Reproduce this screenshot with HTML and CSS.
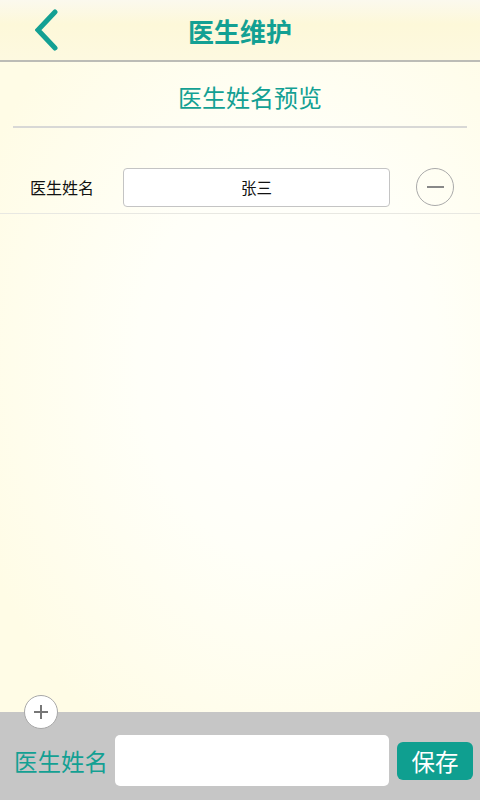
FILE: index.html
```html
<!DOCTYPE html>
<html lang="zh">
<head>
<meta charset="utf-8">
<link rel="stylesheet" href="styles.css">
</head>
<body>
<div class="page">
  <header class="topbar">
    <span class="back">
      <svg width="30" height="44" viewBox="0 0 30 44"><path d="M20 4 L3 22 L20 40" fill="none" stroke="#13a093" stroke-width="5" stroke-linecap="round" stroke-linejoin="miter"/></svg>
    </span>
    <h1 class="title">医生维护</h1>
  </header>
  <section class="preview">
    <h2 class="preview-title">医生姓名预览</h2>
    <div class="divider"></div>
  </section>
  <div class="row">
    <span class="row-label">医生姓名</span>
    <div class="row-input">张三</div>
    <span class="minus"><span class="minus-bar"></span></span>
  </div>
  <div class="spacer"></div>
  <footer class="bottombar">
    <span class="plus">
      <svg width="16" height="16" viewBox="0 0 16 16"><path d="M8 1 V15 M1 8 H15" stroke="#777" stroke-width="2"/></svg>
    </span>
    <span class="bottom-label">医生姓名</span>
    <div class="bottom-input"></div>
    <button class="save">保存</button>
  </footer>
</div>
</body>
</html>
```
FILE: styles.css
```css
html, body {
  margin: 0;
  padding: 0;
}
body {
  font-family: "Noto Sans CJK SC", "Noto Sans", sans-serif;
  width: 480px;
  height: 800px;
  overflow: hidden;
}
.page {
  width: 480px;
  height: 800px;
  display: flex;
  flex-direction: column;
  background: radial-gradient(ellipse 70% 55% at 60% 45%, #ffffff 0%, #fffff8 45%, #fffce6 100%);
}
.topbar {
  height: 60px;
  flex: none;
  display: flex;
  align-items: center;
  justify-content: center;
  position: relative;
  border-bottom: 2px solid #bcbcb6;
  background: linear-gradient(180deg, #fbf9ee 0%, #fdf8d9 40%, #fdf9e0 100%);
}
.back {
  position: absolute;
  left: 35px;
  top: 8px;
  display: flex;
}
.title {
  margin: 0;
  font-size: 26px;
  font-weight: bold;
  color: #13a093;
  letter-spacing: 0;
}
.preview {
  padding: 0 13px;
  flex: none;
}
.preview-title {
  margin: 0;
  height: 64px;
  line-height: 70px;
  padding-left: 20px;
  text-align: center;
  font-size: 24px;
  font-weight: normal;
  color: #13a093;
}
.divider {
  height: 2px;
  background: #d8d8d6;
}
.row {
  flex: none;
  height: 86px;
  box-sizing: border-box;
  padding-top: 40px;
  display: flex;
  align-items: flex-start;
  border-bottom: 1px solid #e8e8e2;
}
.row-label {
  width: 93px;
  padding-left: 30px;
  box-sizing: border-box;
  font-size: 16px;
  line-height: 39px;
  color: #111;
  white-space: nowrap;
}
.row-input {
  margin-left: 30px;
  width: 267px;
  height: 39px;
  box-sizing: border-box;
  border: 1px solid #c4c4c4;
  border-radius: 4px;
  background: #fff;
  text-align: center;
  line-height: 37px;
  font-size: 15.5px;
  color: #111;
}
.minus {
  margin-left: 26px;
  width: 38px;
  height: 38px;
  margin-top: 0;
  border: 1.5px solid #aaa;
  border-radius: 50%;
  box-sizing: border-box;
  display: flex;
  align-items: center;
  justify-content: center;
  background: transparent;
}
.minus-bar {
  width: 17px;
  height: 2px;
  background: #888;
}
.spacer {
  flex: 1;
}
.bottombar {
  flex: none;
  height: 88px;
  background: #c6c6c6;
  position: relative;
  display: flex;
  align-items: center;
  padding: 9px 7px 0 14px;
  box-sizing: border-box;
}
.plus {
  position: absolute;
  left: 24px;
  top: -17px;
  width: 34px;
  height: 34px;
  box-sizing: border-box;
  border: 1px solid #a8a8a8;
  border-radius: 50%;
  background: #fff;
  display: flex;
  align-items: center;
  justify-content: center;
}
.bottom-label {
  font-size: 23.5px;
  color: #13a093;
  white-space: nowrap;
  width: 101px;
}
.bottom-input {
  width: 274px;
  height: 51px;
  background: #fff;
  border-radius: 5px;
}
.save {
  margin-left: 8px;
  width: 76px;
  height: 38px;
  border: none;
  border-radius: 6px;
  background: #0f9f90;
  color: #fff;
  font-family: "Noto Sans CJK SC", sans-serif;
  font-size: 23.5px;
  padding: 0;
}
```
